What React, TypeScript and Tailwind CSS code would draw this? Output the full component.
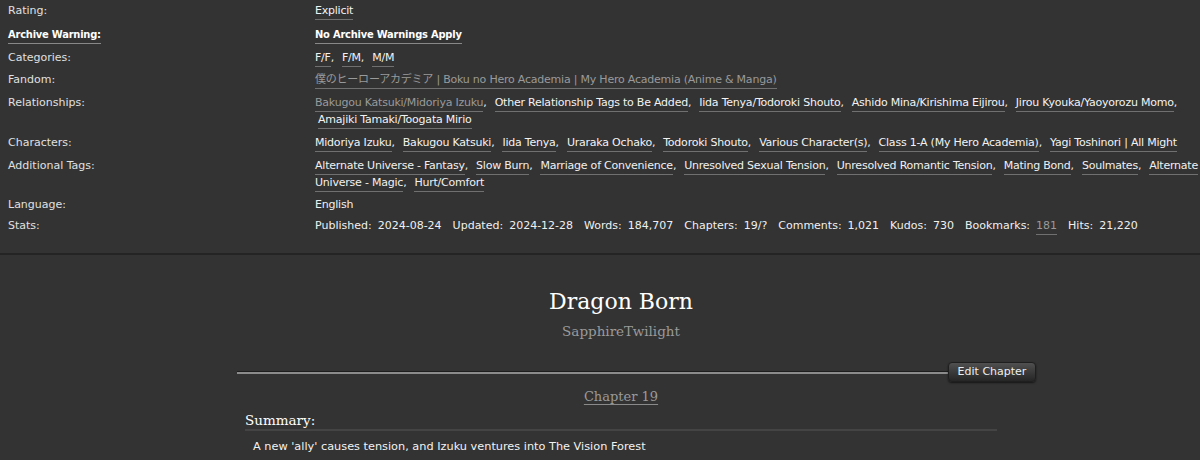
import React from "react";

type Tag = { name: string; visited?: boolean };

function TagLine({ tags, last }: { tags: Tag[]; last?: boolean }) {
  return (
    <div className="whitespace-nowrap">
      {tags.map((t, i) => (
        <span key={t.name + i} className="mr-[8px]">
          <span
            className={`border-b border-[#707070] pb-[2px] ${t.visited ? "text-[#9a9a9a]" : "text-[#f2f2f2]"}`}
          >
            {t.name}
          </span>
          {last && i === tags.length - 1 ? "" : ","}
        </span>
      ))}
    </div>
  );
}

function Row({ label, bold, plain, className = "", children }: { label: string; bold?: boolean; plain?: boolean; className?: string; children: React.ReactNode }) {
  return (
    <div className={`flex ${className}`}>
      <div className="w-[315px] shrink-0 pl-[8px] text-[#e0e0e0]">
        {bold ? (
          <span className="font-['DejaVu_Sans_Condensed',sans-serif] font-bold tracking-[-0.2px] text-white border-b border-[#888] pb-[2px]">{label}</span>
        ) : (
          label
        )}
      </div>
      <div className={`flex-1 ${plain ? "" : "tracking-[-0.22px]"}`}>{children}</div>
    </div>
  );
}

function Stat({ k, v, visited }: { k: string; v: string; visited?: boolean }) {
  return (
    <span className="mr-[11px]">
      {k}
      <span className={`ml-[6px] ${visited ? "text-[#9a9a9a] border-b border-[#707070] pb-[2px]" : ""}`}>{v}</span>
    </span>
  );
}

export default function App() {
  return (
    <div className="min-h-[460px] bg-[#333333] text-[11px] leading-[17px] text-[#f0f0f0] font-['DejaVu_Sans','Noto_Sans_CJK_JP',sans-serif]">
      {/* work meta */}
      <div className="border-b-2 border-[#242424] pt-[2px] pb-[19px]">
        <Row label="Rating:">
          <TagLine tags={[{ name: "Explicit" }]} last />
        </Row>
        <Row label="Archive Warning:" bold className="mt-[7px]">
          <div className="whitespace-nowrap">
            <span className="font-['DejaVu_Sans_Condensed',sans-serif] font-bold tracking-[-0.2px] text-white border-b border-[#888] pb-[2px]">No Archive Warnings Apply</span>
          </div>
        </Row>
        <Row label="Categories:" className="mt-[6px]">
          <TagLine tags={[{ name: "F/F" }, { name: "F/M" }, { name: "M/M" }]} last />
        </Row>
        <Row label="Fandom:" className="mt-[5px]">
          <TagLine tags={[{ name: "僕のヒーローアカデミア | Boku no Hero Academia | My Hero Academia (Anime & Manga)", visited: true }]} last />
        </Row>
        <Row label="Relationships:" className="mt-[6px]">
          <TagLine
            tags={[
              { name: "Bakugou Katsuki/Midoriya Izuku", visited: true },
              { name: "Other Relationship Tags to Be Added" },
              { name: "Iida Tenya/Todoroki Shouto" },
              { name: "Ashido Mina/Kirishima Eijirou" },
              { name: "Jirou Kyouka/Yaoyorozu Momo" },
            ]}
          />
          <div className="pl-[3px]">
            <TagLine tags={[{ name: "Amajiki Tamaki/Toogata Mirio" }]} last />
          </div>
        </Row>
        <Row label="Characters:" className="mt-[6px]">
          <TagLine
            tags={[
              { name: "Midoriya Izuku" },
              { name: "Bakugou Katsuki" },
              { name: "Iida Tenya" },
              { name: "Uraraka Ochako" },
              { name: "Todoroki Shouto" },
              { name: "Various Character(s)" },
              { name: "Class 1-A (My Hero Academia)" },
              { name: "Yagi Toshinori | All Might" },
            ]}
            last
          />
        </Row>
        <Row label="Additional Tags:" className="mt-[6px]">
          <div className="whitespace-nowrap">
            {[
              "Alternate Universe - Fantasy",
              "Slow Burn",
              "Marriage of Convenience",
              "Unresolved Sexual Tension",
              "Unresolved Romantic Tension",
              "Mating Bond",
              "Soulmates",
            ].map((t) => (
              <span key={t} className="mr-[8px]">
                <span className="border-b border-[#707070] pb-[2px]">{t}</span>,
              </span>
            ))}
            <span className="border-b border-[#707070] pb-[2px]">Alternate</span>
          </div>
          <div className="whitespace-nowrap">
            <span className="mr-[8px]">
              <span className="border-b border-[#707070] pb-[2px]">Universe - Magic</span>,
            </span>
            <span className="border-b border-[#707070] pb-[2px]">Hurt/Comfort</span>
          </div>
        </Row>
        <Row label="Language:" className="mt-[5px]">
          English
        </Row>
        <Row label="Stats:" plain className="mt-[4px]">
          <div className="whitespace-nowrap">
            <Stat k="Published:" v="2024-08-24" />
            <Stat k="Updated:" v="2024-12-28" />
            <Stat k="Words:" v="184,707" />
            <Stat k="Chapters:" v="19/?" />
            <Stat k="Comments:" v="1,021" />
            <Stat k="Kudos:" v="730" />
            <Stat k="Bookmarks:" v="181" visited />
            <Stat k="Hits:" v="21,220" />
          </div>
        </Row>
      </div>

      {/* preface */}
      <div className="ml-[237px] w-[768px]">
        <div className="pt-[32px] text-center font-['DejaVu_Serif',serif]">
          <h2 className="text-[22px] leading-[30px] text-white">Dragon Born</h2>
          <div className="mt-[4px] text-[13.5px] leading-[20px] text-[#9a9a9a]">SapphireTwilight</div>
        </div>

        <div className="mt-[21px] flex w-[799px] items-center">
          <div className="h-[3px] flex-1 border-t border-[#1e1e1e] bg-[#8c8c8c]" />
          <button className="h-[20px] w-[88px] rounded-[4px] border border-[#1f1f1f] bg-gradient-to-b from-[#505050] to-[#262626] text-[11px] leading-[18px] text-[#eeeeee] shadow-[0_1px_2px_rgba(0,0,0,0.6)]">
            Edit Chapter
          </button>
        </div>

        <div className="mt-[5px] text-center font-['DejaVu_Serif',serif] text-[13px] leading-[20px]">
          <span className="text-[#9a9a9a] underline underline-offset-[3px] decoration-[#8a8a8a]">Chapter 19</span>
        </div>

        <div className="mx-[8px] mt-[4px]">
          <h3 className="border-b-2 border-[#444] font-['DejaVu_Serif',serif] text-[13.5px] leading-[18px] text-white">Summary:</h3>
          <p className="mt-[7px] pl-[8px] text-[11.3px] text-[#f2f2f2]">A new 'ally' causes tension, and Izuku ventures into The Vision Forest</p>
        </div>
      </div>
    </div>
  );
}
